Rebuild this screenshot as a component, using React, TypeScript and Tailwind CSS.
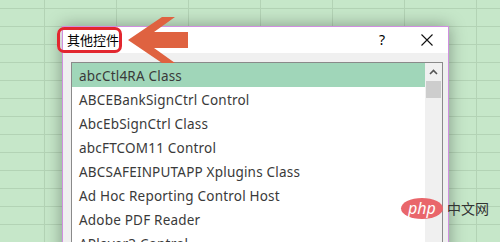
import React from 'react';

const items = [
  'abcCtl4RA Class',
  'ABCEBankSignCtrl Control',
  'AbcEbSignCtrl Class',
  'abcFTCOM11 Control',
  'ABCSAFEINPUTAPP Xplugins Class',
  'Ad Hoc Reporting Control Host',
  'Adobe PDF Reader',
  'APlayer3 Control',
];

export default function App() {
  return (
    <div className="relative w-[500px] h-[242px] overflow-hidden bg-[#c6e7c9] bg-[linear-gradient(to_right,#b3d3b5_1px,transparent_1px),linear-gradient(to_bottom,#b3d3b5_1px,transparent_1px)] [background-size:72px_18px] [background-position:44px_8px] font-['Noto_Sans','Noto_Sans_CJK_SC',sans-serif]">
      {/* white fill of the annotation box, behind the window */}
      <div className="absolute left-[57px] top-[27px] w-[65px] h-[26px] rounded-[7px] bg-white" />

      {/* dialog window */}
      <div className="absolute left-[62px] top-[26px] w-[387px] h-[240px] border border-[#d08fe0] bg-[#f0f0f0] shadow-[0_0_16px_rgba(0,0,0,0.35)] flex flex-col">
        <div className="h-[26px] bg-white flex items-center shrink-0">
          <span className="pl-[4px] text-[13px] text-black leading-none">其他控件</span>
          <div className="flex-1" />
          <span className="w-[30px] text-center text-[14px] text-black leading-none mr-[9px]">?</span>
          <div className="w-[42px] flex items-center justify-center">
            <svg width="12" height="12" viewBox="0 0 12 12">
              <path d="M0.5 0.5 L11.5 11.5 M11.5 0.5 L0.5 11.5" stroke="#111" strokeWidth="1.1" fill="none" />
            </svg>
          </div>
        </div>

        <div className="flex-1 pt-[9px] pl-[8px] pr-[5px]">
          <div className="h-full border-t border-l border-r border-[#8a8a8a] bg-white flex">
            <div className="flex-1 flex flex-col">
              {items.map((item, i) => (
                <div
                  key={item}
                  className={
                    i === 0
                      ? 'h-[24px] shrink-0 flex items-center pl-[7px] pt-[2px] text-[13.5px] tracking-[0.2px] text-[#3a3a3a] bg-[#a0d6b9]'
                      : 'h-[24px] shrink-0 flex items-center pl-[7px] pt-[2px] text-[13.5px] tracking-[0.2px] text-[#3a3a3a]'
                  }
                >
                  {item}
                </div>
              ))}
            </div>
            <div className="w-[17px] bg-[#f0f0f0] flex flex-col items-center">
              <div className="h-[18px] w-full flex items-center justify-center">
                <svg width="9" height="6" viewBox="0 0 9 6">
                  <path d="M1 5 L4.5 1.5 L8 5" stroke="#555" strokeWidth="1.6" fill="none" />
                </svg>
              </div>
              <div className="w-[15px] h-[17px] bg-[#cdcdcd]" />
            </div>
          </div>
        </div>
      </div>

      {/* red annotation border */}
      <div className="absolute left-[57px] top-[27px] w-[65px] h-[26px] rounded-[7px] border-[3px] border-[#e2262e]" />

      {/* annotation arrow */}
      <svg className="absolute left-[126px] top-[16px]" width="64" height="50" viewBox="0 0 64 50">
        <polygon points="2,24 36,1 49,1 28,16 62,16 62,32 28,32 49,47 36,47" fill="#df6240" />
      </svg>

      {/* watermark */}
      <div className="absolute left-[401px] top-[198px] flex items-center gap-[4px]">
        <div className="w-[42px] h-[21px] rounded-[50%] bg-[#e9666b] flex items-center justify-center">
          <span className="text-white italic text-[16px] leading-none -mt-[2px]">php</span>
        </div>
        <span className="text-[14px] text-[#333] leading-none">中文网</span>
      </div>
    </div>
  );
}
